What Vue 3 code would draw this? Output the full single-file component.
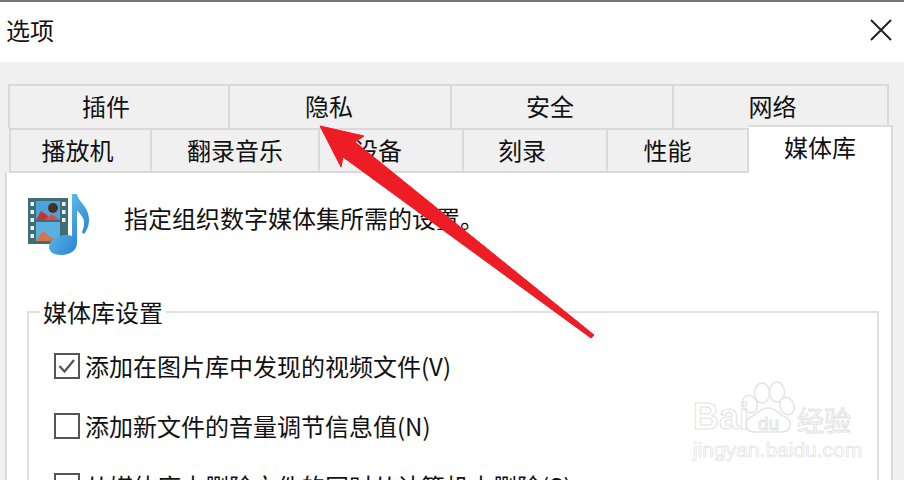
<template>
  <div class="page">
    <div class="top-edge"></div>
    <header class="titlebar">
      <span class="title">选项</span>
      <svg class="close" width="22" height="22" viewBox="0 0 22 22">
        <path d="M1 1L21 21M21 1L1 21" stroke="#222" stroke-width="2" fill="none" />
      </svg>
    </header>

    <div class="body">
      <div class="tabs tabs-back">
        <div
          v-for="t in backTabs"
          :key="t.label"
          class="tab"
          :style="{ width: t.width + 'px', paddingRight: t.shift + 'px' }"
        >{{ t.label }}</div>
      </div>
      <div class="tabs tabs-front">
        <div
          v-for="t in frontTabs"
          :key="t.label"
          class="tab"
          :class="{ active: t.active }"
          :style="{ width: t.width + 'px', paddingRight: t.shift + 'px' }"
        >{{ t.label }}</div>
      </div>

      <div class="panel">
        <div class="intro">
          <svg class="media-icon" width="64" height="64" viewBox="0 0 64 64">
            <defs>
              <linearGradient id="note" x1="0" y1="0" x2="1" y2="1">
                <stop offset="0" stop-color="#7fd0f7" />
                <stop offset="1" stop-color="#1577c9" />
              </linearGradient>
            </defs>
            <rect x="0" y="6" width="40" height="46" fill="#3f6d73" />
            <rect x="8" y="9" width="24" height="19" fill="#4aa3dc" />
            <rect x="8" y="30" width="24" height="19" fill="#5ab0df" />
            <path d="M8 28l5-9 6 4 4 5z" fill="#c8342e" />
            <path d="M17 28l6-6 9 6z" fill="#d8503a" />
            <circle cx="25" cy="16" r="5" fill="#4a3020" />
            <path d="M8 49l7-10 7 6 10 4z" fill="#d8734a" />
            <g fill="#e9efef">
              <rect x="2.500" y="10" width="3.500" height="4" />
              <rect x="2.500" y="18" width="3.500" height="4" />
              <rect x="2.500" y="26" width="3.500" height="4" />
              <rect x="2.500" y="34" width="3.500" height="4" />
              <rect x="2.500" y="42" width="3.500" height="4" />
              <rect x="34" y="10" width="3.500" height="4" />
              <rect x="34" y="18" width="3.500" height="4" />
              <rect x="34" y="26" width="3.500" height="4" />
            </g>
            <path
              d="M44 2h5c1 8 12 12 12 26 0 6-2 10-5 14-1-1-2-1-2-2 2-5 3-9 1-14-2-3-4-6-6-7v32c0 8-8 12-16 12-7 0-12-3-12-8 0-7 9-12 17-12 2 0 4 0 6 1z"
              fill="url(#note)"
            />
          </svg>
          <span class="intro-text">指定组织数字媒体集所需的设置。</span>
        </div>

        <fieldset class="group">
          <legend>媒体库设置</legend>
          <label v-for="o in options" :key="o.label" class="option">
            <span class="box">
              <svg v-if="o.checked" width="22" height="22" viewBox="0 0 22 22">
                <path d="M3.500 11l5 5.500L18 5" stroke="#555" stroke-width="2.200" fill="none" />
              </svg>
            </span>
            <span>{{ o.label }}</span>
          </label>
        </fieldset>
      </div>
    </div>

    <!-- red arrow drawn over the dialog -->
    <svg class="arrow" width="904" height="480" viewBox="0 0 904 480">
      <path
        d="M320 126L364 136L355 142L594 335L591 338L343 157L341 167Z"
        fill="#ee1c25"
        stroke="#ee1c25"
        stroke-width="1"
        stroke-linejoin="round"
      />
    </svg>

    <div class="watermark">
      <svg class="paw" width="64" height="60" viewBox="0 0 64 60">
        <g fill="#fff" stroke="#e4e4e4" stroke-width="1.500">
          <ellipse cx="24" cy="13" rx="7.500" ry="10" />
          <ellipse cx="39" cy="12" rx="7.500" ry="10" />
          <ellipse cx="12" cy="24" rx="7" ry="9" transform="rotate(-25 12 24)" />
          <ellipse cx="49" cy="26" rx="7" ry="9" transform="rotate(-25 49 26)" />
          <path d="M30 28c9 0 10 6 17 9 8 4 6 15-3 15H16C7 52 5 41 13 37c7-3 8-9 17-9z" />
        </g>
      </svg>
      <span class="wm-bai">Bai</span>
      <span class="wm-du">du</span>
      <span class="wm-cn">经验</span>
      <span class="wm-url">jingyan.baidu.com</span>
    </div>
  </div>
</template>

<script setup>
// shift = extra right padding, the labels don't sit centred in the reference
const backTabs = [
  { label: "插件", width: 222, shift: 26 },
  { label: "隐私", width: 222, shift: 22 },
  { label: "安全", width: 222, shift: 24 },
  { label: "网络", width: 215, shift: 16 },
];

const frontTabs = [
  { label: "播放机", width: 143, shift: 6 },
  { label: "翻录音乐", width: 168, shift: 0 },
  { label: "设备", width: 144, shift: 26 },
  { label: "刻录", width: 144, shift: 26 },
  { label: "性能", width: 141, shift: 20 },
  { label: "媒体库", width: 144, shift: 0, active: true },
];

const options = [
  { label: "添加在图片库中发现的视频文件(V)", checked: true },
  { label: "添加新文件的音量调节信息值(N)", checked: false },
  { label: "从媒体库中删除文件的同时从计算机中删除(S)", checked: false },
];
</script>

<style>
html,
body {
  margin: 0;
  background: #f0f0f0;
}
</style>

<style scoped>
.page {
  position: relative;
  width: 904px;
  height: 480px;
  overflow: hidden;
  background: #f0f0f0;
  color: #111;
  font-family: "Noto Sans CJK SC", "Liberation Sans", sans-serif;
  font-size: 24px;
  line-height: 30px;
}

.top-edge {
  height: 2px;
  background: #777;
}

.titlebar {
  height: 60px;
  box-sizing: border-box;
  padding: 0 12px 4px 6px;
  background: #fff;
  display: flex;
  align-items: center;
  justify-content: space-between;
}

.body {
  padding-top: 22px;
}

.tabs {
  display: flex;
}

.tabs-back {
  height: 44px;
  margin-left: 8px;
}

.tabs-front {
  position: relative;
  z-index: 1;
  height: 45px;
  margin-left: 9px;
}

.tab {
  box-sizing: border-box;
  display: flex;
  align-items: center;
  justify-content: center;
  flex: none;
  border: 2px solid #d9d9d9;
  border-left-width: 0;
  background: #f0f0f0;
}

.tab:first-child {
  border-left-width: 2px;
}

.tabs-back .tab {
  border-bottom-width: 0;
  padding-bottom: 2px;
}

.tabs-front .tab {
  border-bottom-width: 2px;
  padding-bottom: 2px;
}

.tabs-front .tab.active {
  height: 50px;
  margin-top: -3px;
  padding-bottom: 8px;
  background: #fff;
  border-color: #dcdcdc;
  border-bottom: 0;
  border-right: 2px solid #d9d9d9;
}

.panel {
  box-sizing: border-box;
  width: 888px;
  height: 310px;
  margin-left: 5px;
  padding: 0 12px 0 20px;
  background: #fff;
  border-left: 2px solid #d9d9d9;
  border-right: 2px solid #d9d9d9;
}

.intro {
  display: flex;
  align-items: center;
  gap: 32px;
  height: 94px;
  padding-left: 1px;
}

.media-icon {
  flex: none;
  margin-top: 8px;
}

.intro-text {
  margin-top: -4px;
}

.group {
  margin: 30px 0 0;
  padding: 24px 0 0;
  height: 220px;
  border: 2px solid #e0e0e0;
  border-bottom: 0;
  min-width: 0;
}

.group legend {
  margin-left: 11px;
  padding: 0 3px;
  line-height: 30px;
}

.option {
  display: flex;
  align-items: center;
  gap: 5px;
  height: 30px;
  margin: 0 0 30px 25px;
  white-space: nowrap;
}

.box {
  box-sizing: border-box;
  flex: none;
  width: 26px;
  height: 26px;
  border: 2px solid #555;
  background: #fff;
  display: flex;
}

.arrow {
  position: absolute;
  left: 0;
  top: 0;
  z-index: 2;
}

.watermark {
  position: absolute;
  left: 690px;
  top: 380px;
  width: 170px;
  height: 84px;
  z-index: 1;
  color: transparent;
  font-family: "Liberation Sans", "Noto Sans CJK SC", sans-serif;
}

.watermark span {
  position: absolute;
  white-space: nowrap;
  -webkit-text-stroke: 1px #e2e2e2;
}

.paw {
  position: absolute;
  left: 48px;
  top: 0;
}

.wm-bai {
  left: 3px;
  top: 16px;
  font-size: 36px;
  line-height: 42px;
  font-weight: 700;
}

.wm-du {
  left: 68px;
  top: 32px;
  font-size: 19px;
  line-height: 24px;
}

.wm-cn {
  left: 107px;
  top: 23px;
  font-size: 27px;
  line-height: 34px;
  font-family: "Noto Sans CJK SC", sans-serif;
}

.wm-url {
  left: 3px;
  top: 58px;
  font-size: 21px;
  line-height: 24px;
  -webkit-text-stroke-width: 0.7px !important;
}
</style>
